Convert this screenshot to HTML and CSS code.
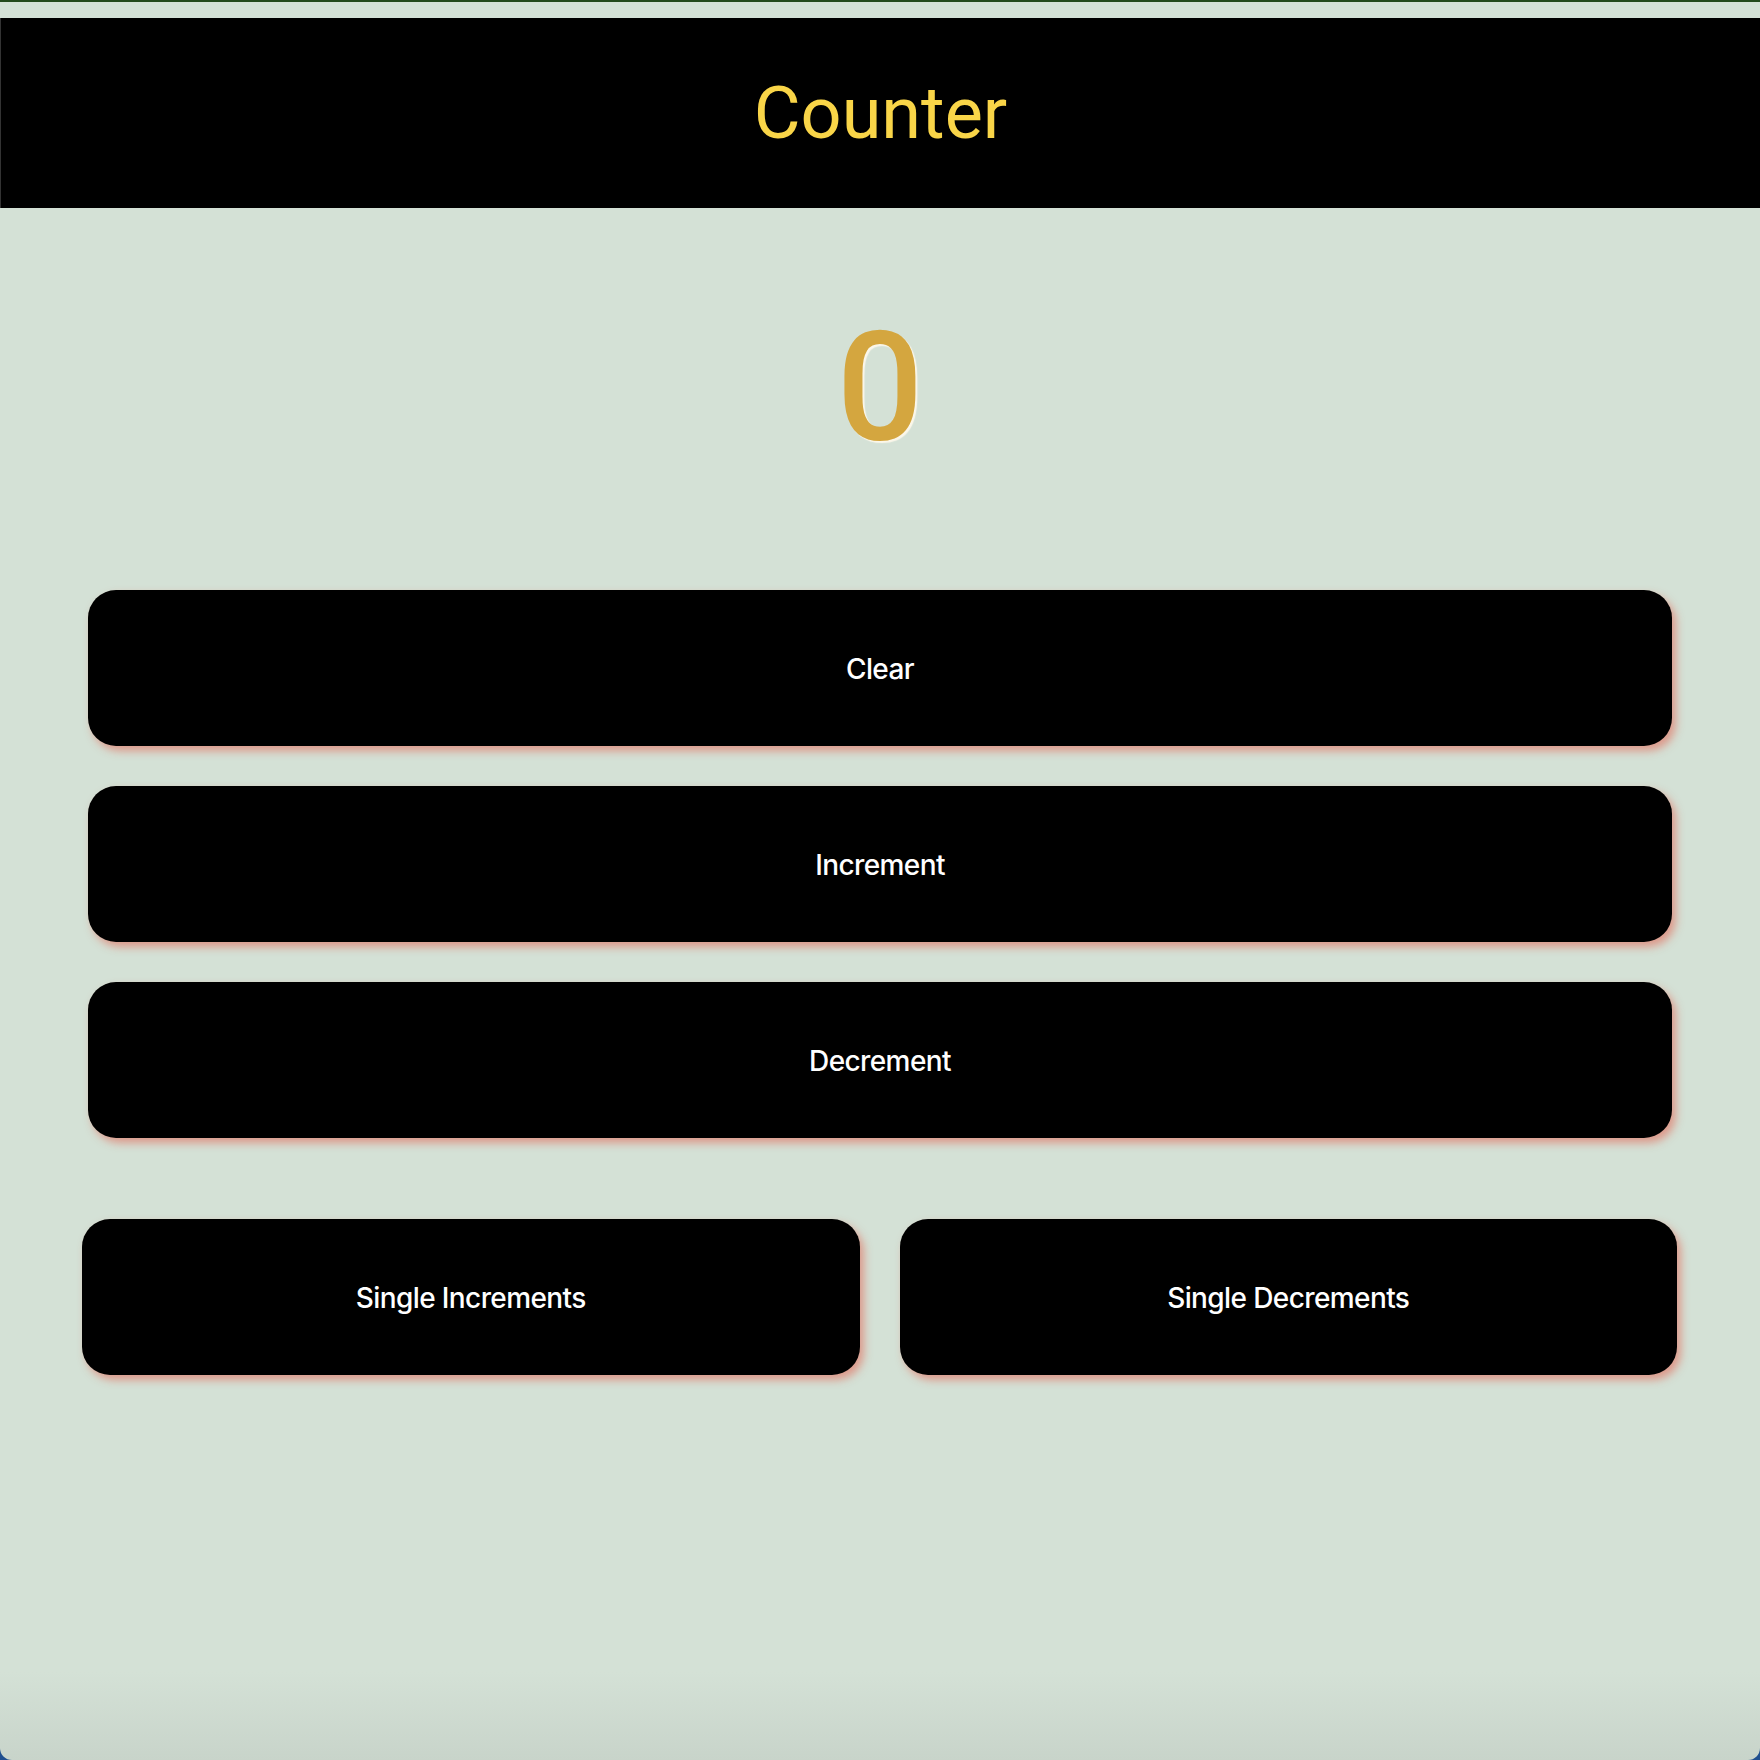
FILE: index.html
```html
<!DOCTYPE html>
<html lang="en">
<head>
<meta charset="utf-8">
<title>Counter</title>
<link rel="stylesheet" href="styles.css">
</head>
<body>
<div class="window">
  <header class="app-header">
    <h1 class="title">Counter</h1>
  </header>
  <main class="content">
    <div class="count">0</div>
    <div class="stack">
      <button class="btn">Clear</button>
      <button class="btn">Increment</button>
      <button class="btn">Decrement</button>
    </div>
    <div class="row">
      <button class="btn">Single Increments</button>
      <button class="btn">Single Decrements</button>
    </div>
  </main>
</div>
</body>
</html>
```
FILE: styles.css
```css
html {
  background: #1f4f8f;
}
body {
  margin: 0;
  height: 1760px;
  overflow: hidden;
}
.window {
  height: 1758px;
  border-top: 2px solid #234a1c;
  background: linear-gradient(to bottom, #d4e1d6 0, #d4e1d6 1670px, #c8d4ca 1758px);
  border-radius: 0 0 12px 12px;
  display: flex;
  flex-direction: column;
}
.app-header {
  margin-top: 16px;
  height: 190px;
  background: #000;
  border-left: 1px solid #333;
  display: flex;
  align-items: center;
  justify-content: center;
  padding-top: 2px;
  box-sizing: border-box;
}
.title {
  margin: 0;
  font-family: Roboto, "Noto Sans", sans-serif;
  font-weight: 400;
  font-size: 72px;
  line-height: 1;
  color: #f9d548;
}
.content {
  display: flex;
  flex-direction: column;
}
.count {
  margin-top: 104px;
  text-align: center;
  font-family: Roboto, "Noto Sans", sans-serif;
  font-size: 152px;
  font-weight: 500;
  line-height: 1;
  color: #d4a63f;
  text-shadow: 2px 2px 1px #fbf7ea;
}
.stack {
  margin-top: 126px;
  padding: 0 88px;
  display: flex;
  flex-direction: column;
  gap: 40px;
}
.row {
  margin-top: 81px;
  padding: 0 83px 0 82px;
  display: grid;
  grid-template-columns: 1fr 1fr;
  gap: 40px;
}
.btn {
  height: 156px;
  padding-top: 2px;
  border: none;
  border-radius: 28px;
  background: #000;
  color: #fff;
  font-family: Inter, "Noto Sans", sans-serif;
  font-size: 28px;
  font-weight: 500;
  letter-spacing: -0.6px;
  box-shadow: 4px 5px 8px rgba(222, 140, 125, 0.85);
  cursor: pointer;
}
```
